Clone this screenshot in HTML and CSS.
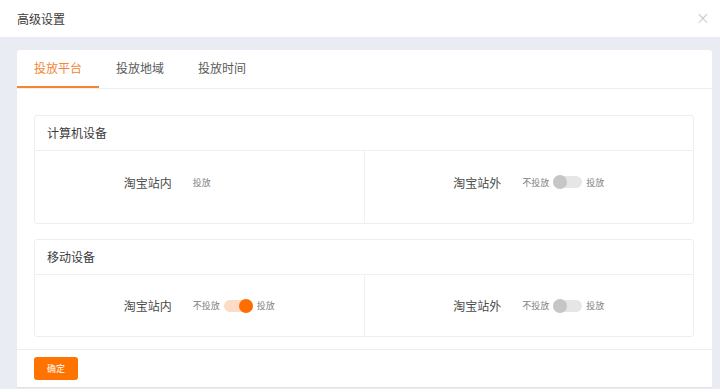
FILE: index.html
```html
<!DOCTYPE html>
<html lang="zh-CN">
<head>
    <meta charset="UTF-8">
    <meta name="viewport" content="width=device-width, initial-scale=1.0">
    <title>高级设置</title>
    <link rel="stylesheet" href="styles.css">
</head>
<body>
    <div class="dialog">
        <div class="dialog-header">
            <span class="dialog-title">高级设置</span>
            <span class="dialog-close">&times;</span>
        </div>

        <div class="dialog-body">
            <div class="card">
                <div class="tabs">
                    <div class="tab active">投放平台</div>
                    <div class="tab">投放地域</div>
                    <div class="tab">投放时间</div>
                </div>

                <div class="tab-content">
                    <div class="device-box">
                        <div class="device-title">计算机设备</div>
                        <div class="device-row first">
                            <div class="device-cell">
                                <span class="site-name">淘宝站内</span>
                                <div class="switch-area">
                                    <span class="switch-text">投放</span>
                                </div>
                            </div>
                            <div class="device-cell">
                                <span class="site-name">淘宝站外</span>
                                <div class="switch-area">
                                    <span class="switch-text">不投放</span>
                                    <span class="switch"></span>
                                    <span class="switch-text">投放</span>
                                </div>
                            </div>
                        </div>
                    </div>

                    <div class="device-box">
                        <div class="device-title">移动设备</div>
                        <div class="device-row">
                            <div class="device-cell">
                                <span class="site-name">淘宝站内</span>
                                <div class="switch-area">
                                    <span class="switch-text">不投放</span>
                                    <span class="switch on"></span>
                                    <span class="switch-text">投放</span>
                                </div>
                            </div>
                            <div class="device-cell">
                                <span class="site-name">淘宝站外</span>
                                <div class="switch-area">
                                    <span class="switch-text">不投放</span>
                                    <span class="switch"></span>
                                    <span class="switch-text">投放</span>
                                </div>
                            </div>
                        </div>
                    </div>
                </div>

                <div class="card-footer">
                    <button class="btn-ok">确定</button>
                </div>
            </div>
        </div>
    </div>
</body>
</html>
```

FILE: styles.css
```css
* {
    margin: 0;
    padding: 0;
    box-sizing: border-box;
    font-family: 'Noto Sans CJK SC', 'Liberation Sans', sans-serif;
}

body {
    background: #e9ecf3;
    color: #333;
    height: 100vh;
    overflow: hidden;
}

.dialog-header {
    display: flex;
    justify-content: space-between;
    align-items: center;
    height: 37px;
    padding: 0 10px 0 17px;
    background: #fff;
}

.dialog-title {
    font-size: 12px;
    color: #3a3a3a;
}

.dialog-close {
    font-size: 17px;
    line-height: 1;
    color: #c4c4c4;
    font-family: 'DejaVu Sans', sans-serif;
    font-weight: 300;
}

.dialog-body {
    padding: 13px 8px 0 17px;
}

.card {
    background: #fff;
    border-radius: 3px 3px 0 0;
    border-bottom: 1px solid #e2e2e2;
}

.tabs {
    display: flex;
    height: 39px;
    border-bottom: 1px solid #eee;
}

.tab {
    padding: 0 17px;
    font-size: 12px;
    line-height: 36px;
    color: #5a5a5a;
    border-bottom: 2px solid transparent;
}

.tab.active {
    color: #f28634;
    border-bottom-color: #f28634;
}

.tab-content {
    padding: 26px 18px 12px 17px;
}

.device-box {
    border: 1px solid #eee;
    border-radius: 3px;
}

.device-box + .device-box {
    margin-top: 15px;
}

.device-title {
    height: 35px;
    line-height: 34px;
    padding-left: 12px;
    font-size: 12px;
    color: #3a3a3a;
    border-bottom: 1px solid #f0f0f0;
}

.device-row {
    display: flex;
    height: 61px;
}

.device-row.first {
    height: 72px;
}

.device-row.first .device-cell {
    padding-bottom: 10px;
}

.device-cell {
    flex: 1;
    display: flex;
    justify-content: center;
    align-items: center;
}

.device-cell + .device-cell {
    border-left: 1px solid #f0f0f0;
}

.site-name {
    font-size: 12px;
    color: #4a4a4a;
    width: 48px;
    margin-right: 21px;
}

.switch-area {
    display: flex;
    align-items: center;
    width: 82px;
    gap: 4px;
}

.switch-text {
    font-size: 9px;
    color: #808080;
}

.switch {
    position: relative;
    width: 29px;
    height: 12px;
    border-radius: 6px;
    background: #e6e6e6;
}

.switch::after {
    content: '';
    position: absolute;
    left: 0;
    top: -1px;
    width: 14px;
    height: 14px;
    border-radius: 50%;
    background: #c6c6c6;
}

.switch.on {
    background: #fcdcc6;
}

.switch.on::after {
    left: auto;
    right: 0;
    background: #ff6d00;
}

.card-footer {
    border-top: 1px solid #eee;
    padding: 7px 17px 7px;
}

.btn-ok {
    display: block;
    width: 44px;
    height: 23px;
    border: none;
    border-radius: 3px;
    background: #ff7300;
    color: #fff;
    font-size: 9px;
}
```
